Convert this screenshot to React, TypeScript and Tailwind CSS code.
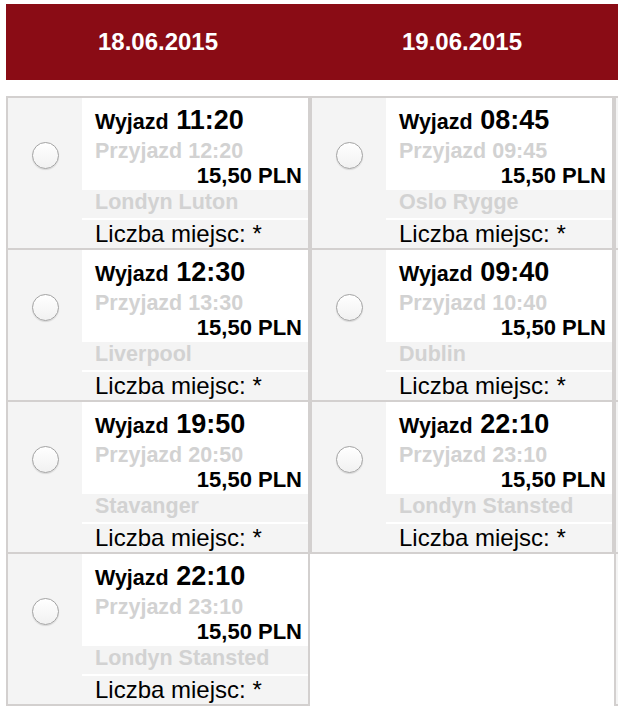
import React from 'react';

type Trip = { dep: string; arr: string; dest: string };

const DAYS: { date: string; trips: Trip[] }[] = [
    {
        date: '18.06.2015',
        trips: [
            { dep: '11:20', arr: '12:20', dest: 'Londyn Luton' },
            { dep: '12:30', arr: '13:30', dest: 'Liverpool' },
            { dep: '19:50', arr: '20:50', dest: 'Stavanger' },
            { dep: '22:10', arr: '23:10', dest: 'Londyn Stansted' },
        ],
    },
    {
        date: '19.06.2015',
        trips: [
            { dep: '08:45', arr: '09:45', dest: 'Oslo Rygge' },
            { dep: '09:40', arr: '10:40', dest: 'Dublin' },
            { dep: '22:10', arr: '23:10', dest: 'Londyn Stansted' },
        ],
    },
];

function Radio() {
    return (
        <span className="block w-[27px] h-[27px] rounded-full border border-[#a3a3a3] bg-linear-to-b from-white to-[#f1f1f1] shadow-[0_1px_1px_rgba(0,0,0,0.12)]" />
    );
}

function TripCard({ trip }: { trip: Trip }) {
    return (
        <label className="flex h-[152px] border-b-2 border-[#d3d0cf] cursor-pointer">
            {/* radio column */}
            <div className="w-[74px] shrink-0 bg-[#f4f4f4] flex justify-center pt-[44px]">
                <Radio />
            </div>

            <div className="flex-1 flex flex-col bg-[#f4f4f4]">
                <div className="h-[92px] bg-white pl-[13px] pr-[6px] pt-[7px]">
                    <div className="h-[30px] text-[27px] leading-[30px] font-bold text-black whitespace-nowrap">
                        <span className="text-[21.5px] leading-none">Wyjazd</span> {trip.dep}
                    </div>
                    <div className="h-[32px] text-[21.5px] leading-[32px] font-bold text-[#d2d2d2] whitespace-nowrap">
                        Przyjazd {trip.arr}
                    </div>
                    <div className="h-[18px] text-[22px] leading-[18px] font-bold text-black text-right">
                        15,50 PLN
                    </div>
                </div>
                <div className="h-[28px] pl-[13px] text-[21.5px] leading-[24px] font-bold text-[#d2d2d2] whitespace-nowrap">
                    {trip.dest}
                </div>
                <div className="h-[2px] bg-white" />
                <div className="h-[28px] pl-[13px] text-[24px] leading-[28px] text-black whitespace-nowrap">
                    Liczba miejsc: *
                </div>
            </div>
        </label>
    );
}

// next day's column, only its edge is in view
function NextColumn() {
    return (
        <div className="w-[304px] border-x-2 border-t-2 border-[#d3d0cf]">
            {[0, 1, 2, 3].map((i) => (
                <div key={i} className="h-[152px] border-b-2 border-[#d3d0cf] bg-[#f4f4f4]" />
            ))}
        </div>
    );
}

export default function App() {
    return (
        <div className="h-screen w-full overflow-hidden bg-white font-['Liberation_Sans',Arial,sans-serif]">
            <div className="pt-[4px] pl-[6px] w-max">
                {/* day headers */}
                <div className="flex bg-[#8a0c15]">
                    {DAYS.map((day) => (
                        <div
                            key={day.date}
                            className="w-[304px] h-[76px] flex items-center justify-center text-white text-[24px] font-bold"
                        >
                            {day.date}
                        </div>
                    ))}
                    <div className="w-[304px] h-[76px]" />
                </div>

                {/* trips per day */}
                <div className="flex items-start mt-[16px]">
                    {DAYS.map((day) => (
                        <div key={day.date} className="w-[304px] border-x-2 border-t-2 border-[#d3d0cf]">
                            {day.trips.map((trip, i) => (
                                <TripCard key={i} trip={trip} />
                            ))}
                        </div>
                    ))}
                    <NextColumn />
                </div>
            </div>
        </div>
    );
}
